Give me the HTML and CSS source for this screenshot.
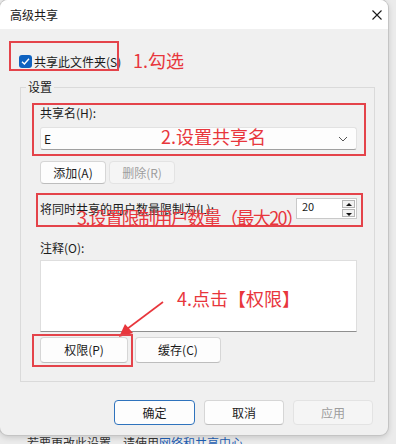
FILE: index.html
```html
<!DOCTYPE html>
<html lang="zh-CN">
<head>
    <meta charset="UTF-8">
    <title>高级共享</title>
    <link rel="stylesheet" href="styles.css">
</head>
<body>
    <div class="dialog">
        <div class="titlebar">
            <span>高级共享</span>
            <svg class="close" width="10" height="10" viewBox="0 0 10 10">
                <path d="M0.5 0.5 L9.5 9.5 M9.5 0.5 L0.5 9.5" stroke="#1a1a1a" stroke-width="1.1" fill="none"/>
            </svg>
        </div>
        <div class="content">
            <div class="check-row">
                <span class="check-box">
                    <svg width="9" height="9" viewBox="0 0 9 9">
                        <path d="M1 4.8 L3.4 7 L8 1.8" stroke="#fff" stroke-width="1.4" fill="none"/>
                    </svg>
                </span>
                <span>共享此文件夹(S)</span>
            </div>

            <div class="group">
                <div class="group-title">设置</div>
                <div class="label">共享名(H):</div>
                <div class="combo">
                    <span>E</span>
                    <svg width="10" height="6" viewBox="0 0 10 6">
                        <path d="M1 1 L5 5 L9 1" stroke="#555" stroke-width="1" fill="none"/>
                    </svg>
                </div>
                <div class="btn-row small-gap">
                    <button class="btn btn-add">添加(A)</button>
                    <button class="btn btn-del disabled">删除(R)</button>
                </div>
                <div class="limit-row">
                    <span>将同时共享的用户数量限制为(L):</span>
                    <div class="spin">
                        <span class="spin-value">20</span>
                        <div class="spin-arrows">
                            <span class="arrow up"></span>
                            <span class="arrow down"></span>
                        </div>
                    </div>
                </div>
                <div class="label note-label">注释(O):</div>
                <div class="note"></div>
                <div class="btn-row">
                    <button class="btn btn-perm">权限(P)</button>
                    <button class="btn btn-cache">缓存(C)</button>
                </div>
            </div>

            <div class="footer">
                <button class="btn btn-foot primary">确定</button>
                <button class="btn btn-foot">取消</button>
                <button class="btn btn-foot disabled">应用</button>
            </div>
        </div>

        <!-- annotations drawn on top of the dialog -->
        <div class="mark mark-1"></div>
        <div class="tip tip-1">1.勾选</div>
        <div class="mark mark-2"></div>
        <div class="tip tip-2">2.设置共享名</div>
        <div class="mark mark-3"></div>
        <div class="tip tip-3">3.设置限制用户数量（最大20）</div>
        <div class="tip tip-4">4.点击【权限】</div>
        <svg class="pointer" width="60" height="45" viewBox="0 0 60 45">
            <path d="M49 1 L13 28" stroke="#e8363c" stroke-width="1.6" fill="none"/>
            <path d="M5 36 L11 23 L19 32 Z" fill="#e8363c"/>
        </svg>
        <div class="mark mark-4"></div>
    </div>
    <div class="behind">若要更改此设置，请使用<span class="link">网络和共享中心</span>。</div>
</body>
</html>
```

FILE: styles.css
```css
* {
    box-sizing: border-box;
}

body {
    margin: 0;
    width: 396px;
    height: 444px;
    overflow: hidden;
    background-color: #ebebeb;
    font-family: "Noto Sans CJK SC", "Noto Sans", sans-serif;
    font-size: 12px;
    color: #1b1b1b;
}

.dialog {
    position: relative;
    width: 388px;
    height: 435px;
    background-color: #f0f0f0;
    border-radius: 8px;
    box-shadow: 0 0 0 1px #c4c4c4, 0 2px 6px rgba(0, 0, 0, 0.18);
    overflow: hidden;
}

.titlebar {
    height: 29px;
    background-color: #fff;
    display: flex;
    align-items: center;
    justify-content: space-between;
    padding: 0 6px 0 10px;
    line-height: 16px;
}

.content {
    padding: 0 13px 0 20px;
}

.check-row {
    margin-top: 23px;
    margin-left: -1px;
    height: 18px;
    display: flex;
    align-items: center;
    gap: 2px;
}

.check-box {
    width: 13px;
    height: 13px;
    border-radius: 3px;
    background-color: #0f62c0;
    display: flex;
    align-items: center;
    justify-content: center;
}

.group {
    margin-top: 17px;
    border: 1px solid #dadada;
    padding: 0 17px 18px 19px;
}

.group-title {
    width: fit-content;
    margin: -9px 0 0 -14px;
    padding: 0 2px;
    line-height: 16px;
    background-color: #f0f0f0;
}

.label {
    margin-top: 10px;
    line-height: 16px;
}

.combo {
    margin-top: 6px;
    height: 23px;
    background-color: #fdfdfd;
    border: 1px solid #e2e2e2;
    border-bottom-color: #a0a0a0;
    border-radius: 3px;
    display: flex;
    align-items: center;
    justify-content: space-between;
    padding: 0 8px 0 3px;
}

.btn-row {
    display: flex;
    gap: 7px;
    margin-top: 5px;
}

.btn-row.small-gap {
    gap: 3px;
    margin-top: 11px;
}

.btn {
    font-family: inherit;
    font-size: 12px;
    color: #1b1b1b;
    background-color: #fdfdfd;
    border: 1px solid #d6d6d6;
    border-bottom-color: #bdbdbd;
    border-radius: 4px;
    padding: 0;
    line-height: 16px;
}

.btn.disabled {
    color: #9d9d9d;
    background-color: #f5f5f5;
    border-color: #e3e3e3;
}

.btn-add,
.btn-del {
    width: 66px;
    height: 23px;
}

.btn-perm {
    width: 88px;
    height: 26px;
}

.btn-cache {
    width: 86px;
    height: 26px;
}

.limit-row {
    margin-top: 14px;
    display: flex;
    align-items: center;
    justify-content: space-between;
}

.spin {
    width: 61px;
    height: 21px;
    background-color: #fff;
    border: 1px solid #c9c9c9;
    display: flex;
    justify-content: space-between;
    padding: 1px;
}

.spin-value {
    font-size: 11px;
    line-height: 12px;
    padding-left: 4px;
}

.spin-arrows {
    width: 13px;
    display: flex;
    flex-direction: column;
    gap: 1px;
}

.arrow {
    flex: 1;
    border: 1px solid #b5b5b5;
    background-color: #f2f2f2;
    position: relative;
}

.arrow::after {
    content: "";
    position: absolute;
    left: 3px;
    width: 0;
    height: 0;
    border-left: 3px solid transparent;
    border-right: 3px solid transparent;
}

.arrow.up::after {
    top: 2px;
    border-bottom: 3px solid #111;
}

.arrow.down::after {
    top: 3px;
    border-top: 3px solid #111;
}

.note-label {
    margin-top: 21px;
}

.note {
    margin-top: 4px;
    height: 72px;
    background-color: #fff;
    border: 1px solid #dedede;
    border-bottom-color: #8f8f8f;
}

.footer {
    margin-top: 18px;
    margin-right: 2px;
    display: flex;
    justify-content: flex-end;
    gap: 9px;
}

.btn-foot {
    width: 80px;
    height: 25px;
}

.btn-foot.primary {
    width: 81px;
    border-color: #2f73bd;
}

/* red annotations */
.mark {
    position: absolute;
    border: 2px solid #e4434a;
}

.mark-1 {
    left: 9px;
    top: 41px;
    width: 110px;
    height: 30px;
}

.mark-2 {
    left: 32px;
    top: 103px;
    width: 334px;
    height: 53px;
}

.mark-3 {
    left: 36px;
    top: 193px;
    width: 327px;
    height: 34px;
}

.mark-4 {
    left: 32px;
    top: 334px;
    width: 101px;
    height: 33px;
}

.tip {
    position: absolute;
    font-size: 18px;
    line-height: 22px;
    color: #e8363c;
    white-space: nowrap;
}

.tip-1 {
    left: 133px;
    top: 49px;
}

.tip-2 {
    left: 161px;
    top: 125px;
}

.tip-3 {
    left: 77px;
    top: 206px;
    letter-spacing: -1.6px;
}

.tip-4 {
    left: 177px;
    top: 287px;
}

.pointer {
    position: absolute;
    left: 114px;
    top: 301px;
}

.behind {
    margin-top: 1px;
    padding-left: 27px;
    line-height: 14px;
    color: #333;
}

.behind .link {
    color: #1f5fb3;
}
```
